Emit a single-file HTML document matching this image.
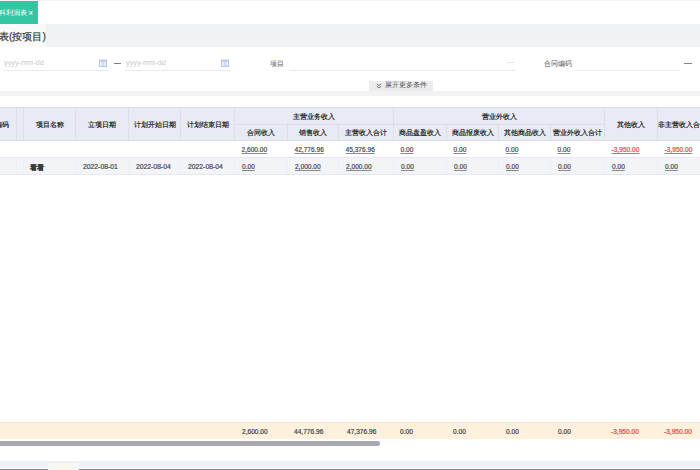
<!DOCTYPE html>
<html><head><meta charset="utf-8">
<style>
*{margin:0;padding:0;box-sizing:border-box}
html,body{width:700px;height:470px;overflow:hidden;background:#fff;font-family:"Liberation Sans",sans-serif;color:#333}
.a{position:absolute}
#tab{left:0;top:1px;width:38px;height:23px;background:#33c6a2;color:#fff;font-size:7px;line-height:23px;white-space:nowrap;overflow:hidden}
#tband{left:0;top:24px;width:700px;height:23px;background:#f1f2f4}
#tbox{left:0;top:24px;width:46px;height:23px;background:#f9f9f9}
#title{left:-11px;top:25px;font-size:10.3px;line-height:23px;color:#444;-webkit-text-stroke:0.25px #444;white-space:nowrap}
#gap{left:0;top:91px;width:700px;height:5px;background:#f2f2f3}
.ph{font-size:7.3px;color:#c8c8c8;white-space:nowrap;line-height:10px}
.ul{height:1px;background:#eaeaea}
.lbl{font-size:7px;color:#555;white-space:nowrap;line-height:10px}
.cal{width:8px;height:8px}
svg{display:block}
#btn{left:369px;top:81px;width:64px;height:11px;background:#ececec;font-size:6.8px;color:#555;line-height:11px;white-space:nowrap}
table{border-collapse:collapse;table-layout:fixed}
#tbl{position:absolute;left:-37px;top:107px;width:744px}
#tbl th{background:#e9ebf4;border:1px solid #dcdfe9;font-size:6.5px;color:#333;font-weight:bold;text-align:center;white-space:nowrap;overflow:hidden;padding:0}
#tbl td{font-size:6.6px;color:#4a4a4e;-webkit-text-stroke:0.2px currentColor;white-space:nowrap;overflow:hidden;padding:0 0 0 7px;height:17px;border-bottom:1px solid #e6e8ef}
#tbl tr.r2 td{padding-top:1px;background:#f3f4f8;border-right:1px solid #eff0f5}
#tbl td.dt{font-size:6.8px}
#tbl td u{text-decoration:underline;text-decoration-color:#8a8a8a}
#tbl tr.sh th{padding-top:2px}
#tbl th{padding-top:2px}
#tbl td.red{color:#e04a4a}
#sum{left:0;top:422px;width:700px;height:17px;background:#fdf1de;border-top:1px solid #f0e2cc}
#sum span{position:absolute;top:0;font-size:6.6px;line-height:17px;color:#444;-webkit-text-stroke:0.2px currentColor;white-space:nowrap}
#thumb{left:-5px;top:441px;width:385px;height:5px;border-radius:3px;background:#a9a9b0}
#foot{left:0;top:461px;width:700px;height:7px;background:#eff2f4}
#footl{left:0;top:469px;width:700px;height:1px;background:#7f8387}
</style></head><body>
<div class="a" style="left:0;top:0;width:700px;height:1px;background:#f4f4f5"></div>
<div class="a" id="tab"><span class="a" style="right:11px;top:0;font-size:6.6px">科利润表</span><span class="a" style="left:28px;top:0.5px;font-size:9px">×</span></div>
<div class="a" id="tband"></div>
<div class="a" id="tbox"></div>
<div class="a" id="title">报表(按项目)</div>

<div class="a ph" style="left:4px;top:57.5px">yyyy-mm-dd</div>
<div class="a cal" style="left:99px;top:59px"><svg width="8" height="8" viewBox="0 0 8 8"><rect x="0" y="0.5" width="8" height="7.5" fill="#b7c9ea"/><rect x="1" y="2.5" width="2.5" height="4.5" fill="#e3ebf8"/><rect x="4.5" y="2.5" width="2.5" height="4.5" fill="#e3ebf8"/></svg></div>
<div class="a ul" style="left:3px;top:70px;width:106px"></div>
<div class="a" style="left:114px;top:63px;width:7px;height:1px;background:#808080"></div>
<div class="a ph" style="left:126px;top:57.5px">yyyy-mm-dd</div>
<div class="a cal" style="left:221px;top:59px"><svg width="8" height="8" viewBox="0 0 8 8"><rect x="0" y="0.5" width="8" height="7.5" fill="#b7c9ea"/><rect x="1" y="2.5" width="2.5" height="4.5" fill="#e3ebf8"/><rect x="4.5" y="2.5" width="2.5" height="4.5" fill="#e3ebf8"/></svg></div>
<div class="a ul" style="left:125px;top:70px;width:106px"></div>
<div class="a lbl" style="left:270px;top:59px">项目</div>
<div class="a ul" style="left:289px;top:70px;width:227px"></div>
<div class="a lbl" style="left:507px;top:58px;color:#999">···</div>
<div class="a lbl" style="left:544px;top:59px">合同编码</div>
<div class="a ul" style="left:574px;top:70px;width:106px"></div>
<div class="a" style="left:684px;top:63px;width:8px;height:1px;background:#808080"></div>
<div class="a" id="btn"><svg class="a" style="left:7px;top:2px" width="6" height="6" viewBox="0 0 6 6"><path d="M0.8 0.8L3 2.6L5.2 0.8M0.8 3.2L3 5L5.2 3.2" stroke="#666" stroke-width="0.9" fill="none"/></svg><span class="a" style="left:16px;top:-2px;font-size:6.8px">展开更多条件</span></div>
<div class="a" id="gap"></div>

<table id="tbl">
<colgroup>
<col style="width:53px"><col style="width:7px"><col style="width:52px"><col style="width:53px"><col style="width:52px"><col style="width:54px"><col style="width:53px"><col style="width:51px"><col style="width:55px"><col style="width:53px"><col style="width:52px"><col style="width:52px"><col style="width:54px"><col style="width:53px"><col style="width:50px">
</colgroup>
<tr style="height:17px">
<th rowspan="2" style="text-align:right;padding-right:7px">项目编码</th><th rowspan="2"></th><th rowspan="2">项目名称</th><th rowspan="2">立项日期</th><th rowspan="2">计划开始日期</th><th rowspan="2">计划结束日期</th>
<th colspan="3">主营业务收入</th><th colspan="4">营业外收入</th><th rowspan="2">其他收入</th><th rowspan="2">非主营收入合计</th>
</tr>
<tr class="sh" style="height:16px">
<th>合同收入</th><th>销售收入</th><th>主营收入合计</th><th>商品盘盈收入</th><th>商品报废收入</th><th>其他商品收入</th><th>营业外收入合计</th>
</tr>
<tr>
<td></td><td></td><td></td><td></td><td></td><td></td>
<td><u>2,600.00</u></td><td><u>42,776.96</u></td><td><u>45,376.96</u></td><td><u>0.00</u></td><td><u>0.00</u></td><td><u>0.00</u></td><td><u>0.00</u></td><td class="red"><u>-3,950.00</u></td><td class="red"><u>-3,950.00</u></td>
</tr>
<tr class="r2">
<td>1</td><td></td><td style="color:#3a3a3a;font-weight:bold;font-size:7px;padding-left:6px"><span style="position:relative;top:1.5px">看看</span></td><td class="dt">2022-08-01</td><td class="dt">2022-08-04</td><td class="dt">2022-08-04</td>
<td><u>0.00</u></td><td><u>2,000.00</u></td><td><u>2,000.00</u></td><td><u>0.00</u></td><td><u>0.00</u></td><td><u>0.00</u></td><td><u>0.00</u></td><td><u>0.00</u></td><td><u>0.00</u></td>
</tr>
</table>

<div class="a" id="sum">
<span style="left:242px">2,600.00</span>
<span style="left:294px">44,776.96</span>
<span style="left:347px">47,376.96</span>
<span style="left:400px">0.00</span>
<span style="left:453px">0.00</span>
<span style="left:506px">0.00</span>
<span style="left:558px">0.00</span>
<span style="left:611px;color:#e04a4a">-3,950.00</span>
<span style="left:664px;color:#e04a4a">-3,950.00</span>
</div>
<div class="a" id="thumb"></div>
<div class="a" id="foot"></div>
<div class="a" id="footl"></div>
<div class="a" style="left:48px;top:463px;width:31px;height:7px;background:#f6f8f6"></div>
<div class="a" style="left:56px;top:464px;width:16px;height:6px;background:#fbf6ec"></div>
</body></html>
